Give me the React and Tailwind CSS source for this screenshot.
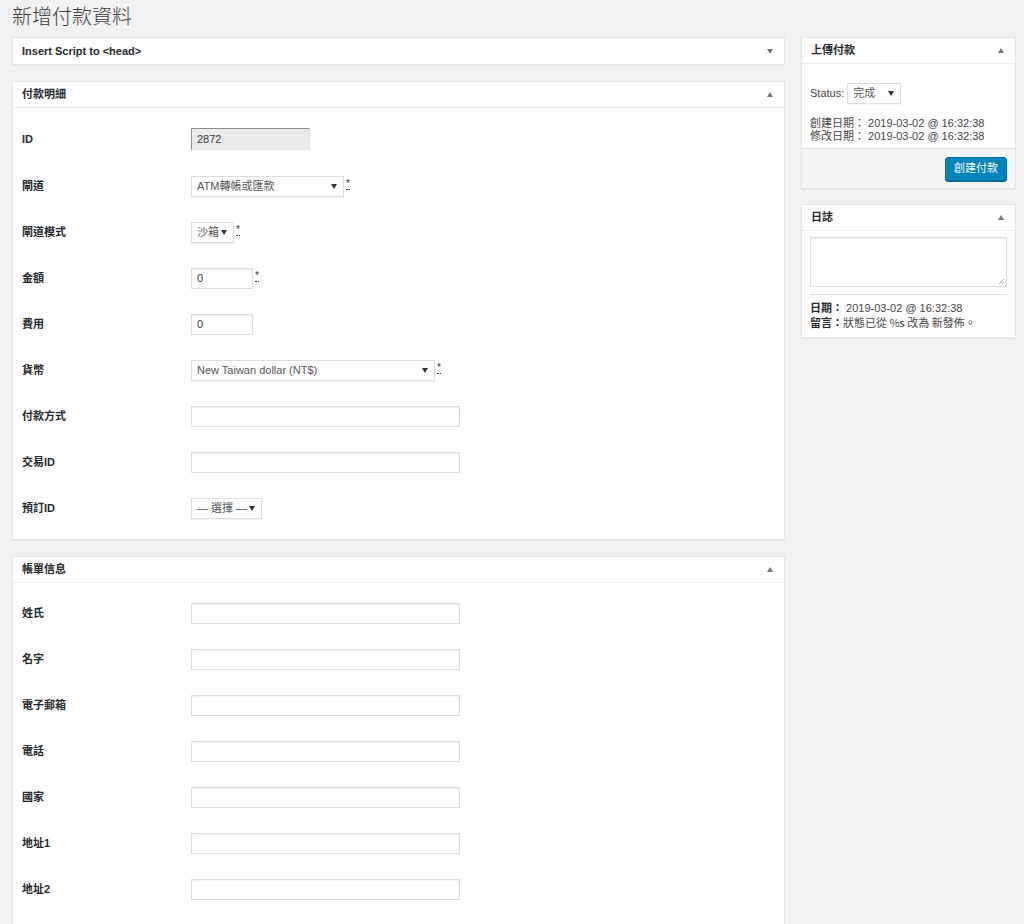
import React from "react";

const font = "font-['Liberation_Sans','Noto_Sans_CJK_TC',sans-serif]";

// 小三角 (收合按鈕)
const Toggle = ({ up }) => (
  <span
    className={`block w-0 h-0 border-l-[3.5px] border-r-[3.5px] border-l-transparent border-r-transparent ${
      up ? "border-b-[5px] border-b-[#72777c]" : "border-t-[5px] border-t-[#72777c]"
    }`}
  />
);

const Caret = () => (
  <span className="block w-0 h-0 border-l-[3px] border-r-[3px] border-l-transparent border-r-transparent border-t-[5px] border-t-[#333]" />
);

const Box = ({ title, up = true, children }) => (
  <div className="bg-white border border-[#e5e5e5] shadow-[0_1px_1px_rgba(0,0,0,0.04)]">
    <div
      className={`h-[26px] flex items-center justify-between pl-[9px] pr-[11px] ${
        children ? "border-b border-[#eee]" : ""
      }`}
    >
      <h2 className="text-[11px] font-bold text-[#23282d]">{title}</h2>
      <Toggle up={up} />
    </div>
    {children}
  </div>
);

const Req = () => (
  <abbr className="ml-[2px] text-[10px] leading-none text-[#333] no-underline border-b border-dotted border-[#333] self-start mt-[3px]">
    *
  </abbr>
);

const Input = ({ w, value = "" }) => (
  <div
    className={`${w} h-[21px] bg-white border border-[#ddd] shadow-[inset_0_1px_2px_rgba(0,0,0,0.07)] flex items-center px-[5px] text-[11px] text-[#32373c]`}
  >
    {value}
  </div>
);

const Select = ({ w, value }) => (
  <div
    className={`${w} h-[21px] bg-white border border-[#ddd] shadow-[0_1px_1px_rgba(0,0,0,0.04)] flex items-center justify-between pl-[5px] pr-[6px] text-[11px] text-[#555]`}
  >
    <span className="whitespace-nowrap">{value}</span>
    <Caret />
  </div>
);

const Row = ({ label, children, h = "h-[46px]" }) => (
  <div className={`${h} flex items-center`}>
    <div className="w-[169px] text-[11px] font-bold text-[#23282d]">{label}</div>
    <div className="flex items-center">{children}</div>
  </div>
);

const billing = ["姓氏", "名字", "電子郵箱", "電話", "國家", "地址1", "地址2", ""];

export default function App() {
  return (
    <div className={`bg-[#f1f1f1] ${font} text-[#444] overflow-hidden h-[924px]`}>
      <h1 className="pl-[12px] pt-[4px] h-[37px] text-[20px] font-light text-[#3c3c3c] leading-[24px] font-['Noto_Sans_CJK_TC',sans-serif]">
        新增付款資料
      </h1>

      <div className="flex pl-[12px] gap-[16px]">
        {/* 左欄 */}
        <div className="w-[773px] flex flex-col gap-[16px]">
          <Box title="Insert Script to <head>" up={false} />

          <Box title="付款明細">
            <div className="pl-[9px] pt-[7px] pb-[8px]">
              <Row label="ID" h="h-[48px]">
                <div className="w-[119px] h-[22px] bg-[#ebebeb] border border-[#e3e3e3] border-t-[#8d8d8d] border-l-[#8d8d8d] flex items-center px-[5px] text-[11px] text-[#32373c]">
                  2872
                </div>
              </Row>
              <Row label="閘道">
                <Select w="w-[153px]" value="ATM轉帳或匯款" />
                <Req />
              </Row>
              <Row label="閘道模式">
                <Select w="w-[43px]" value="沙箱" />
                <Req />
              </Row>
              <Row label="金額">
                <Input w="w-[62px]" value="0" />
                <Req />
              </Row>
              <Row label="費用">
                <Input w="w-[62px]" value="0" />
              </Row>
              <Row label="貨幣">
                <Select w="w-[244px]" value="New Taiwan dollar (NT$)" />
                <Req />
              </Row>
              <Row label="付款方式">
                <Input w="w-[269px]" />
              </Row>
              <Row label="交易ID">
                <Input w="w-[269px]" />
              </Row>
              <Row label="預訂ID">
                <Select w="w-[71px]" value="— 選擇 —" />
              </Row>
            </div>
          </Box>

          <Box title="帳單信息">
            <div className="pl-[9px] pt-[7px] pb-[9px]">
              {billing.map((label, i) => (
                <Row key={i} label={label}>
                  <Input w="w-[269px]" />
                </Row>
              ))}
            </div>
          </Box>
        </div>

        {/* 右欄 */}
        <div className="w-[215px] flex flex-col gap-[15px]">
          <Box title="上傳付款">
            <div className="px-[8px] pt-[19px] pb-[5px] text-[11px] text-[#444]">
              <div className="flex items-center gap-[3px]">
                <span>Status:</span>
                <Select w="w-[54px]" value="完成" />
              </div>
              <div className="mt-[13px] leading-[13px]">
                <div>創建日期： 2019-03-02 @ 16:32:38</div>
                <div>修改日期： 2019-03-02 @ 16:32:38</div>
              </div>
            </div>
            <div className="bg-[#f5f5f5] border-t border-[#ddd] h-[40px] flex items-center justify-end pr-[8px]">
              <button className="h-[24px] px-[8px] bg-[#0085ba] border border-[#0073aa] rounded-[3px] text-white text-[11px] shadow-[0_1px_0_#006799]">
                創建付款
              </button>
            </div>
          </Box>

          <Box title="日誌">
            <div className="px-[8px] pt-[6px] pb-[7px]">
              <div className="h-[50px] border border-[#ddd] shadow-[inset_0_1px_2px_rgba(0,0,0,0.07)] relative">
                <svg className="absolute right-[1px] bottom-[1px]" width="7" height="7" viewBox="0 0 7 7">
                  <path d="M6 1 L1 6 M6 4 L4 6" stroke="#999" strokeWidth="1" />
                </svg>
              </div>
              <div className="border-t border-[#ddd] mt-[7px] pt-[6px] text-[11px] leading-[14px]">
                <div>
                  <b className="text-[#23282d]">日期：</b> 2019-03-02 @ 16:32:38
                </div>
                <div>
                  <b className="text-[#23282d]">留言：</b>
                  <span className="font-['Noto_Sans_CJK_TC',sans-serif] text-[#444]">狀態已從 %s 改為 新發佈。</span>
                </div>
              </div>
            </div>
          </Box>
        </div>
      </div>
    </div>
  );
}
